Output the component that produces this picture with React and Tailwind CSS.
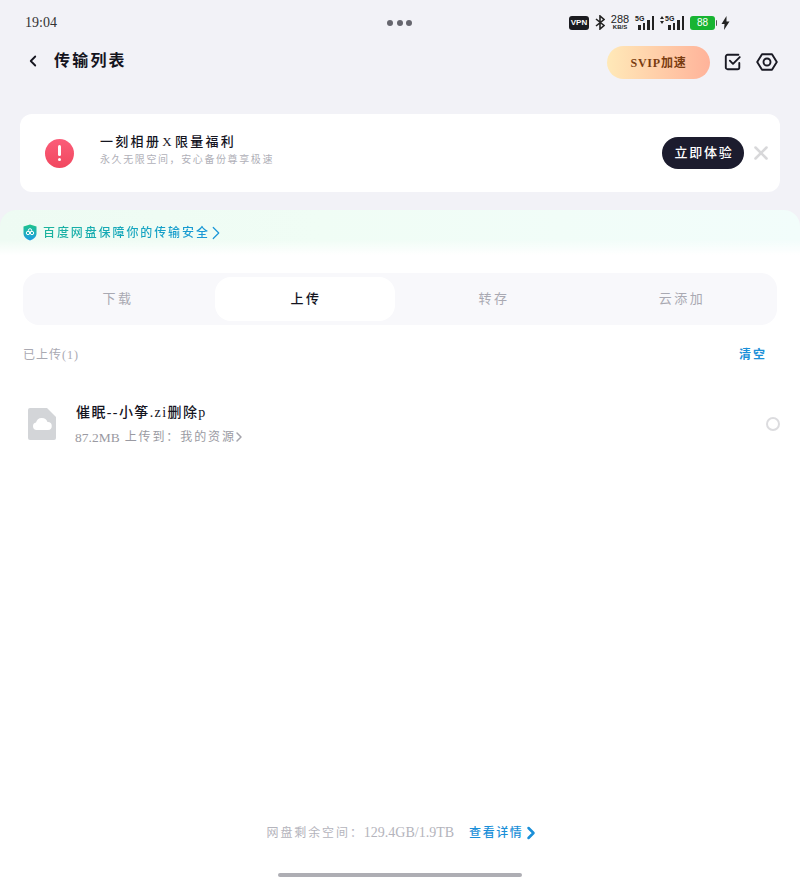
import React from 'react';
import { ChevronLeft, ChevronRight, X } from 'lucide-react';

// signal bars with the small 5G tag, used twice in the status bar
const Signal = ({ arrows }) => (
  <div className="relative w-[19px] h-[15px]">
    {arrows && (
      <svg width="4" height="8" viewBox="0 0 4 8" fill="#222" className="absolute left-[-5px] top-[1px]">
        <path d="M2 0l2 3H0zM2 8L0 5h4z" />
      </svg>
    )}
    <span className="absolute left-0 top-0 text-[7px] leading-[8px] font-bold font-['Liberation_Sans',sans-serif] text-[#222]">5G</span>
    <div className="absolute right-0 bottom-0 flex items-end gap-[2px]">
      <div className="w-[2.5px] h-[5px] bg-[#222]" />
      <div className="w-[2.5px] h-[7px] bg-[#222]" />
      <div className="w-[2.5px] h-[10px] bg-[#222]" />
      <div className="w-[2.5px] h-[14px] bg-[#222]" />
    </div>
  </div>
);

const StatusBar = () => (
  <div className="relative flex items-center justify-between h-[45px] pl-[25px] pr-[70px] shrink-0">
    <span className="text-[14px] text-[#333]">19:04</span>
    <div className="absolute left-[387px] top-[20px] flex gap-[3.5px]">
      <div className="w-[6px] h-[6px] rounded-full bg-[#66666e]" />
      <div className="w-[6px] h-[6px] rounded-full bg-[#66666e]" />
      <div className="w-[6px] h-[6px] rounded-full bg-[#66666e]" />
    </div>
    <div className="flex items-center">
      <span className="w-[20px] h-[14px] mr-[6px] rounded-[3px] bg-[#1b1b20] text-white text-[8px] leading-[14px] text-center font-bold font-['Liberation_Sans',sans-serif]">VPN</span>
      <svg width="10" height="15" viewBox="0 0 10 15" fill="none" stroke="#222" strokeWidth="1.6" className="mr-[6px]">
        <path d="M1 4l8 6.5L5 14V1l4 3.5L1 11" />
      </svg>
      <div className="flex flex-col items-center w-[18px] mr-[6px] font-['Liberation_Sans',sans-serif] text-[#222]">
        <span className="text-[11px] leading-[9px]">288</span>
        <span className="text-[6px] leading-[7px] font-bold">KB/S</span>
      </div>
      <div className="mr-[11px]"><Signal /></div>
      <div className="mr-[6px]"><Signal arrows /></div>
      <div className="flex items-center mr-[4px]">
        <span className="w-[25px] h-[14px] rounded-[3px] bg-[#18b432] text-white text-[10px] leading-[14px] text-center font-['Liberation_Sans',sans-serif]">88</span>
        <div className="w-[1.5px] h-[6px] bg-[#555] ml-[0.5px] rounded-r-sm" />
      </div>
      <svg width="9" height="14" viewBox="0 0 9 14" fill="#222">
        <path d="M5.5 0L0.5 8h3L3 14l5.5-8.5h-3z" />
      </svg>
    </div>
  </div>
);

const Header = () => (
  <div className="flex items-center h-[31px] pl-[24px] pr-[22px] shrink-0">
    <ChevronLeft size={18} strokeWidth={2.4} className="text-[#15151f] mr-[12px]" />
    <h1 className="text-[16px] font-bold tracking-[2.2px] text-[#14141e]">传输列表</h1>
    <button className="ml-auto mt-[4px] w-[103px] h-[33px] rounded-full bg-gradient-to-r from-[#ffe9b8] to-[#ffb39a] text-[12px] font-bold tracking-[0.8px] text-[#7a3c10] mr-[14px]">
      SVIP加速
    </button>
    <svg width="18" height="18" viewBox="0 0 20 20" fill="none" stroke="#1a1a24" strokeWidth="2.1" strokeLinecap="round" strokeLinejoin="round" className="mr-[14px] mt-[2px]">
      <path d="M17 11v5a2 2 0 0 1-2 2H4a2 2 0 0 1-2-2V4a2 2 0 0 1 2-2h12" />
      <path d="M6.5 8.5l3.5 3.5L17.5 4.5" />
    </svg>
    <svg width="22" height="18" viewBox="0 0 22 18" fill="none" stroke="#1a1a24" strokeWidth="1.9" strokeLinejoin="round" className="mt-[2px]">
      <path d="M6 1.2h10L20.8 9 16 16.8H6L1.2 9z" />
      <circle cx="11" cy="9" r="3.5" />
    </svg>
  </div>
);

const PromoCard = () => (
  <div className="flex items-center h-[78px] mx-[20px] mt-[38px] pl-[25px] pr-[8px] rounded-xl bg-white shrink-0">
    <div className="flex items-center justify-center w-[29px] h-[29px] rounded-full bg-gradient-to-b from-[#fb5d79] to-[#f1475f]">
      <div className="flex flex-col items-center gap-[2px]">
        <div className="w-[3px] h-[11px] rounded-full bg-white" />
        <div className="w-[3px] h-[3px] rounded-full bg-white" />
      </div>
    </div>
    <div className="ml-[26px] mb-[6px] flex flex-col">
      <span className="text-[13px] leading-[20px] font-medium tracking-[2.3px] text-[#15151f]">
        一刻相册<span className="mx-[1px]">X</span>限量福利
      </span>
      <span className="text-[10px] leading-[16px] tracking-[1.6px] text-[#b0b0b8]">永久无限空间，安心备份尊享极速</span>
    </div>
    <button className="ml-auto w-[82px] h-[32px] pl-[2px] rounded-full bg-[#1c1c2e] text-white text-[13px] font-medium tracking-[1.8px]">
      立即体验
    </button>
    <X size={22} strokeWidth={2.8} className="ml-[6px] text-[#d8d8da]" />
  </div>
);

const SafeBanner = () => (
  <div className="flex items-center h-[45px] mt-[18px] pl-[23px] rounded-t-2xl bg-[linear-gradient(180deg,transparent_65%,#ffffff_100%),linear-gradient(90deg,#eefbf3,#f0fdf5_40%,#f2fdfb)] shrink-0">
    <svg width="14" height="17" viewBox="0 0 14 17" className="mr-[6px]">
      <defs>
        <linearGradient id="shield" x1="0" y1="0" x2="0" y2="1">
          <stop offset="0" stopColor="#20c48a" />
          <stop offset="1" stopColor="#1c9be6" />
        </linearGradient>
      </defs>
      <path d="M7 0.5l6.5 2v7c0 3.5-3.5 6-6.5 7-3-1-6.5-3.5-6.5-7v-7z" fill="url(#shield)" />
      <circle cx="5" cy="9" r="1.7" fill="none" stroke="#fff" strokeWidth="1" />
      <circle cx="9" cy="9" r="1.7" fill="none" stroke="#fff" strokeWidth="1" />
      <circle cx="7" cy="6.4" r="1.7" fill="none" stroke="#fff" strokeWidth="1" />
    </svg>
    <span className="text-[12px] font-medium tracking-[1.9px] bg-gradient-to-r from-[#1cb49c] to-[#1a96d8] bg-clip-text text-transparent">百度网盘保障你的传输安全</span>
    <ChevronRight size={22} strokeWidth={1.3} className="text-[#1a96d8] ml-[-5px]" />
  </div>
);

const tabs = ['下载', '上传', '转存', '云添加'];

const Tabs = () => (
  <div className="flex items-center gap-2 h-[52px] mx-[23px] mt-[18px] pl-1 pr-1.5 rounded-2xl bg-[#f8f8fb] shrink-0">
    {tabs.map((tab) => (
      <div
        key={tab}
        className={
          tab === '上传'
            ? 'flex items-center justify-center w-[180px] h-[44px] pl-[2px] rounded-2xl bg-white text-[13px] font-medium tracking-[2.5px] text-[#15151f]'
            : 'flex items-center justify-center w-[180px] h-[44px] pl-[2px] text-[13px] tracking-[2.5px] text-[#a9a9b2]'
        }
      >
        {tab}
      </div>
    ))}
  </div>
);

const FileRow = () => (
  <div className="flex items-center h-[64px] mt-[27px] pl-[28px] pr-[20px]">
    <svg width="28" height="32" viewBox="0 0 28 32">
      <path d="M2 0h17l9 9v21a2 2 0 0 1-2 2H2a2 2 0 0 1-2-2V2a2 2 0 0 1 2-2z" fill="#d3d5d8" />
      <path d="M8.5 22a3.8 3.8 0 0 1-.5-7.5 6 6 0 0 1 11.5-.5 4 4 0 0 1 .5 8z" fill="#fff" />
    </svg>
    <div className="flex flex-col ml-[20px] pt-[1px]">
      <span className="text-[14px] leading-[25px] font-medium tracking-[1.4px] text-[#15151f]">催眠--小筝.zi删除p</span>
      <span className="flex items-center ml-[-1px] text-[12px] leading-[25px] tracking-[1.9px] text-[#9a9aa2]">
        <span className="text-[13.5px] font-normal tracking-normal">87.2MB</span>
        <span className="ml-[5px]">上传到：我的资源</span>
        <ChevronRight size={16} strokeWidth={2.2} className="text-[#a4a4ac] ml-[-5px]" />
      </span>
    </div>
    <div className="ml-auto w-[14px] h-[14px] rounded-full border-2 border-[#dcdcdf]" />
  </div>
);

const App = () => {
  return (
    <div className="flex flex-col h-[882px] w-[800px] overflow-hidden bg-[#f2f2f7] font-['Liberation_Serif','Noto_Sans_CJK_SC',serif]">
      <StatusBar />
      <Header />
      <PromoCard />
      <SafeBanner />
      <main className="flex flex-col flex-1 bg-white">
        <Tabs />
        <div className="flex items-center justify-between mt-[20px] pl-[23px] pr-[33px] h-[20px]">
          <span className="text-[12px] tracking-[1px] text-[#a9a9b2]">已上传(1)</span>
          <span className="text-[12px] font-bold tracking-[2px] text-[#1a8fd8]">清空</span>
        </div>
        <FileRow />
        <div className="flex items-center justify-center mt-auto pl-[2px] text-[12px] tracking-[1.9px]">
          <span className="text-[#b4b4bc]">
            网盘剩余空间：<span className="text-[14px] tracking-normal">129.4GB/1.9TB</span>
          </span>
          <span className="ml-[15px] font-medium tracking-[1.6px] text-[#1a8fd8]">查看详情</span>
          <ChevronRight size={20} strokeWidth={3} className="text-[#1a8fd8] ml-[-2px] mr-[-6px]" />
        </div>
        <div className="flex justify-center mt-[30px] mb-[5px]">
          <div className="w-[244px] h-[4px] rounded-full bg-[#aeaeb4]" />
        </div>
      </main>
    </div>
  );
};

export default App;
